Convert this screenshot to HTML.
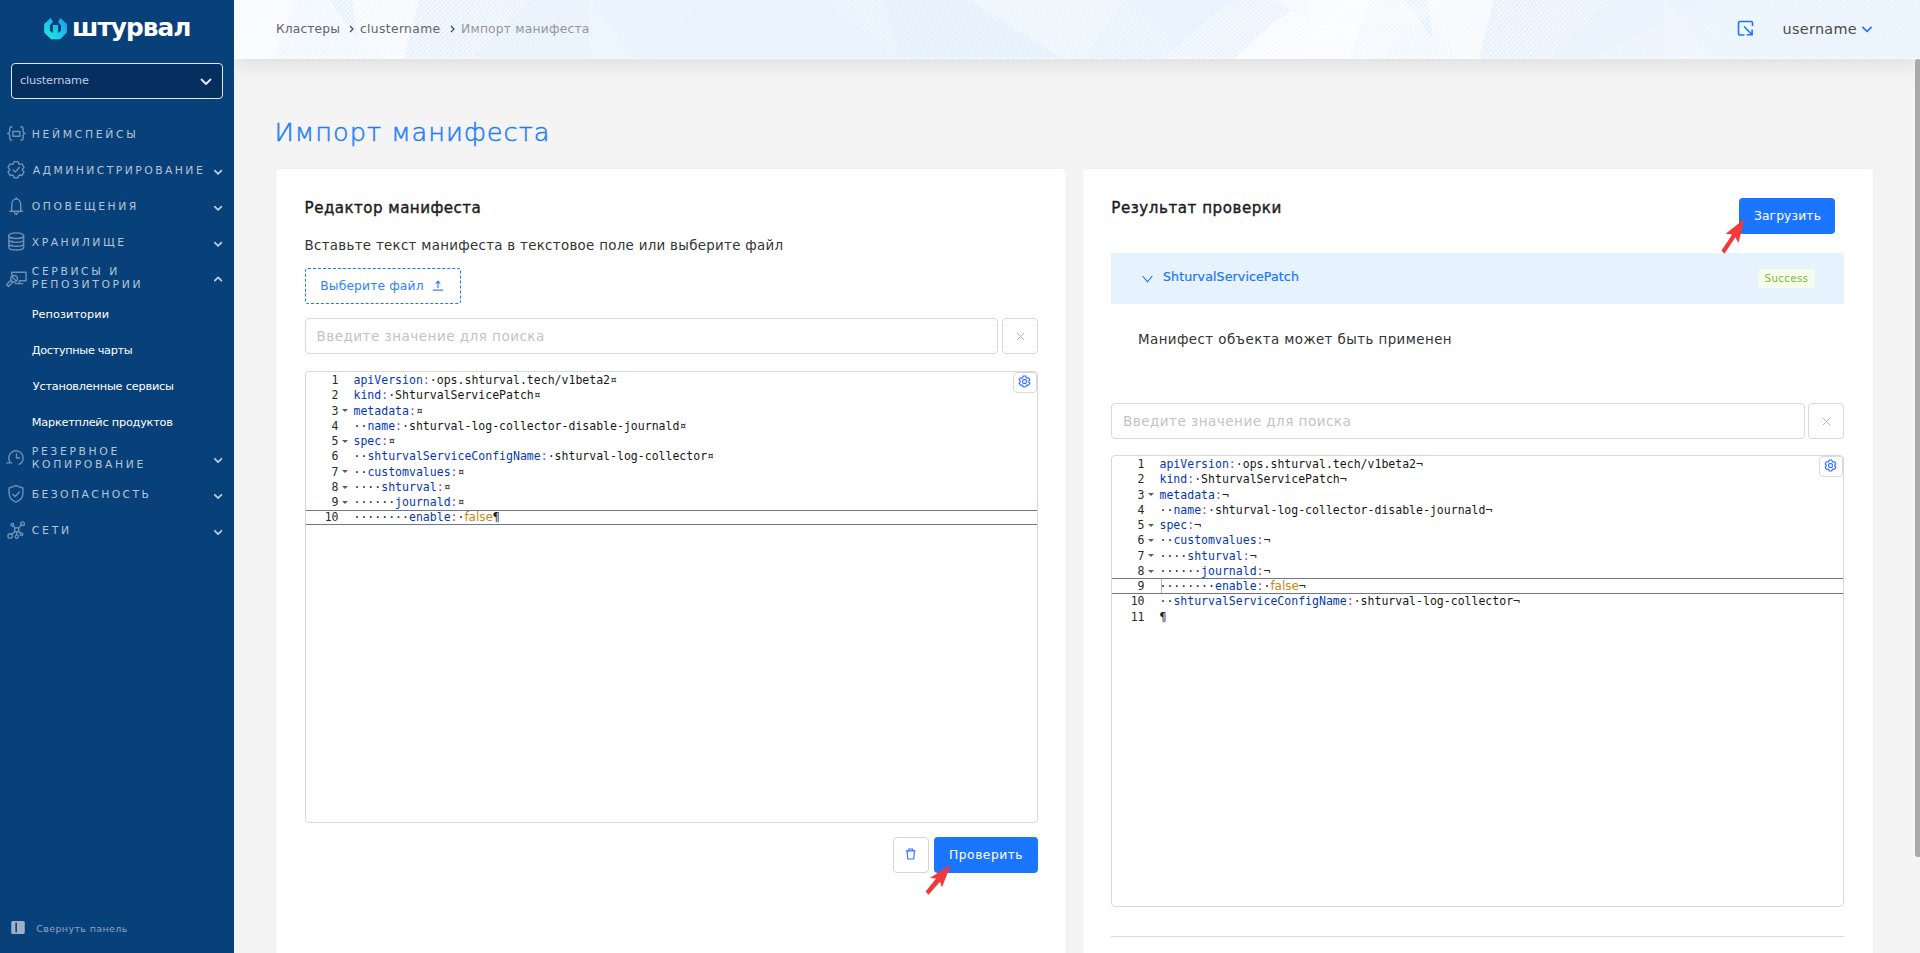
<!DOCTYPE html>
<html lang="ru">
<head>
<meta charset="utf-8">
<title>Импорт манифеста</title>
<style>
*{box-sizing:border-box;margin:0;padding:0}
html,body{width:1920px;height:953px;overflow:hidden;background:#f4f4f4;font-family:"DejaVu Sans","Liberation Sans",sans-serif;color:#333}
body{position:relative}
.abs{position:absolute}
.t{position:absolute;white-space:nowrap;line-height:1;font-family:"DejaVu Sans","Liberation Sans",sans-serif}
svg{display:block}
#side{position:absolute;left:0;top:0;width:234px;height:953px;background:#084079}
#cluster{position:absolute;left:11px;top:63px;width:212px;height:36px;border:1px solid #dfe6ee;border-radius:4px;background:#052f5f}
.chev{position:absolute;left:213.500px;width:9px;height:6px}
.ico{position:absolute}
#head{position:absolute;left:234px;top:0;width:1686px;height:59px;background:#e9f3fe;box-shadow:0 4px 24px rgba(0,0,0,.10);overflow:visible}
.card{position:absolute;top:169px;height:800px;background:#fff;border-radius:4px;box-shadow:0 0 3px rgba(0,0,0,.05)}
.inp{position:absolute;height:36px;border:1px solid #d9d9d9;border-radius:4px;background:#fff}
.xbtn{position:absolute;width:36px;height:36px;border:1px solid #d9d9d9;border-radius:4px;background:#fff}
.xbtn svg{position:absolute;left:12.500px;top:13px}
.ed{position:absolute;border:1px solid #d8d8d8;border-radius:4px;background:#fff;overflow:hidden}
.ln{position:absolute;left:0;height:15.270px;width:100%;font-family:"DejaVu Sans Mono","Liberation Mono",monospace;font-size:11.530px;line-height:15.270px;white-space:pre;color:#1a1a1a}
.ln .n{position:absolute;right:698.500px;top:0;color:#2a2a2a}
.ln .c{position:absolute;left:47.500px;top:0}
.k{color:#0537b5}.pn{color:#9a35dc}.inv{color:#222}.v{color:#161616}
.f{font-family:"DejaVu Sans","Liberation Sans",sans-serif;color:#c48a1c;font-size:12.100px;letter-spacing:-.1px}
.fold{position:absolute;left:35.700px;top:5.700px;width:0;height:0;border-left:3px solid transparent;border-right:3px solid transparent;border-top:3.500px solid #5e5e5e}
.act{position:absolute;left:0;width:100%;border-top:1px solid #70739a;border-bottom:1px solid #70739a;height:15.500px}
.cur{position:absolute;left:48.500px;width:1px;height:14px;background:#b5b5b5}
.gear{position:absolute;right:0;top:0;width:24px;height:21px;border:1px solid #d9d9d9;border-radius:4px;background:#fff}
.gear svg{position:absolute;left:4.200px;top:2.300px}
.btn{position:absolute;background:#1a75ff;border-radius:4px;height:36px}
</style>
</head>
<body>

<div class="card" style="left:276px;width:790px"></div>
<div class="card" style="left:1083px;width:790px"></div>
<div id="head"><svg class="abs" style="left:0;top:0" width="1686" height="59" viewBox="0 0 1686 59"><defs><clipPath id="hc"><rect width="1686" height="59"/></clipPath></defs><g clip-path="url(#hc)"><g><rect x="0" y="0" width="1075" height="59" fill="#e9f3fe"/><polygon points="0,0 62,0 40,59 0,59" fill="#f8fbff"/><polygon points="62,0 125,0 150,59 40,59" fill="#f1f7fe"/><polygon points="96,0 118,0 124,40" fill="#e2effc"/><polygon points="118,0 185,0 170,59 150,59" fill="#f5f9ff"/><polygon points="185,0 240,0 228,59 170,59" fill="#e3effc"/><polygon points="240,0 355,0 355,59 228,59" fill="#e6f1fd"/><polygon points="355,0 470,0 420,59 355,59" fill="#eaf4fe"/><polygon points="650,0 735,0 830,59 665,59" fill="#e5f1fc"/><polygon points="735,0 890,0 850,59 830,59" fill="#edf6fd"/><polygon points="1000,59 1040,22 1075,0 1075,59" fill="#f7faff"/><polygon points="1040,0 1075,0 1075,20" fill="#f4f8fe"/></g><g transform="translate(1075 0)"><rect x="0" y="0" width="1075" height="59" fill="#e9f3fe"/><polygon points="0,0 62,0 40,59 0,59" fill="#f8fbff"/><polygon points="62,0 125,0 150,59 40,59" fill="#f1f7fe"/><polygon points="96,0 118,0 124,40" fill="#e2effc"/><polygon points="118,0 185,0 170,59 150,59" fill="#f5f9ff"/><polygon points="185,0 240,0 228,59 170,59" fill="#e3effc"/><polygon points="240,0 355,0 355,59 228,59" fill="#e6f1fd"/><polygon points="355,0 470,0 420,59 355,59" fill="#eaf4fe"/><polygon points="650,0 735,0 830,59 665,59" fill="#e5f1fc"/><polygon points="735,0 890,0 850,59 830,59" fill="#edf6fd"/><polygon points="1000,59 1040,22 1075,0 1075,59" fill="#f7faff"/><polygon points="1040,0 1075,0 1075,20" fill="#f4f8fe"/></g><g clip-path="url(#hc)"><path d="M-15 59L45 0M-10 59L50 0M-5 59L55 0M0 59L60 0M5 59L65 0M10 59L70 0M15 59L75 0M20 59L80 0M25 59L85 0M30 59L90 0M35 59L95 0M40 59L100 0M45 59L105 0M50 59L110 0M55 59L115 0M60 59L120 0M65 59L125 0M70 59L130 0M75 59L135 0M80 59L140 0M85 59L145 0M90 59L150 0M95 59L155 0M100 59L160 0M105 59L165 0M110 59L170 0M115 59L175 0M120 59L180 0M125 59L185 0M130 59L190 0M135 59L195 0M140 59L200 0M145 59L205 0M150 59L210 0M155 59L215 0M160 59L220 0M165 59L225 0M170 59L230 0M175 59L235 0M180 59L240 0M185 59L245 0M190 59L250 0M195 59L255 0M200 59L260 0M205 59L265 0M210 59L270 0M215 59L275 0M220 59L280 0M225 59L285 0M230 59L290 0M235 59L295 0" stroke="#ffffff" stroke-opacity="0.55" stroke-width="1.4" fill="none"/><path d="M135 59L90 0M139 59L94 0M143 59L98 0M147 59L102 0M151 59L106 0M155 59L110 0M159 59L114 0M163 59L118 0M167 59L122 0M171 59L126 0M175 59L130 0M179 59L134 0M183 59L138 0M187 59L142 0M191 59L146 0M195 59L150 0M199 59L154 0M203 59L158 0M207 59L162 0M211 59L166 0M215 59L170 0M219 59L174 0M223 59L178 0M227 59L182 0M231 59L186 0M235 59L190 0M239 59L194 0M243 59L198 0M247 59L202 0M251 59L206 0M255 59L210 0M259 59L214 0M263 59L218 0M267 59L222 0M271 59L226 0M275 59L230 0M279 59L234 0M283 59L238 0M287 59L242 0M291 59L246 0M295 59L250 0M299 59L254 0M303 59L258 0M307 59L262 0M311 59L266 0M315 59L270 0M319 59L274 0M323 59L278 0M327 59L282 0M331 59L286 0M335 59L290 0M339 59L294 0M343 59L298 0M347 59L302 0M351 59L306 0M355 59L310 0M359 59L314 0M363 59L318 0M367 59L322 0M371 59L326 0M375 59L330 0M379 59L334 0M383 59L338 0M387 59L342 0M391 59L346 0M395 59L350 0M399 59L354 0" stroke="#ffffff" stroke-opacity="0.5" stroke-width="1.2" fill="none"/><path d="M1060 59L1120 0M1065 59L1125 0M1070 59L1130 0M1075 59L1135 0M1080 59L1140 0M1085 59L1145 0M1090 59L1150 0M1095 59L1155 0M1100 59L1160 0M1105 59L1165 0M1110 59L1170 0M1115 59L1175 0M1120 59L1180 0M1125 59L1185 0M1130 59L1190 0M1135 59L1195 0M1140 59L1200 0M1145 59L1205 0M1150 59L1210 0M1155 59L1215 0M1160 59L1220 0M1165 59L1225 0M1170 59L1230 0M1175 59L1235 0M1180 59L1240 0M1185 59L1245 0M1190 59L1250 0M1195 59L1255 0M1200 59L1260 0M1205 59L1265 0M1210 59L1270 0M1215 59L1275 0M1220 59L1280 0M1225 59L1285 0M1230 59L1290 0M1235 59L1295 0M1240 59L1300 0M1245 59L1305 0M1250 59L1310 0M1255 59L1315 0M1260 59L1320 0M1265 59L1325 0M1270 59L1330 0M1275 59L1335 0M1280 59L1340 0M1285 59L1345 0M1290 59L1350 0M1295 59L1355 0M1300 59L1360 0M1305 59L1365 0M1310 59L1370 0" stroke="#ffffff" stroke-opacity="0.55" stroke-width="1.4" fill="none"/><path d="M1210 59L1165 0M1214 59L1169 0M1218 59L1173 0M1222 59L1177 0M1226 59L1181 0M1230 59L1185 0M1234 59L1189 0M1238 59L1193 0M1242 59L1197 0M1246 59L1201 0M1250 59L1205 0M1254 59L1209 0M1258 59L1213 0M1262 59L1217 0M1266 59L1221 0M1270 59L1225 0M1274 59L1229 0M1278 59L1233 0M1282 59L1237 0M1286 59L1241 0M1290 59L1245 0M1294 59L1249 0M1298 59L1253 0M1302 59L1257 0M1306 59L1261 0M1310 59L1265 0M1314 59L1269 0M1318 59L1273 0M1322 59L1277 0M1326 59L1281 0M1330 59L1285 0M1334 59L1289 0M1338 59L1293 0M1342 59L1297 0M1346 59L1301 0M1350 59L1305 0M1354 59L1309 0M1358 59L1313 0M1362 59L1317 0M1366 59L1321 0M1370 59L1325 0M1374 59L1329 0M1378 59L1333 0M1382 59L1337 0M1386 59L1341 0M1390 59L1345 0M1394 59L1349 0M1398 59L1353 0M1402 59L1357 0M1406 59L1361 0M1410 59L1365 0M1414 59L1369 0M1418 59L1373 0M1422 59L1377 0M1426 59L1381 0M1430 59L1385 0M1434 59L1389 0M1438 59L1393 0M1442 59L1397 0M1446 59L1401 0M1450 59L1405 0M1454 59L1409 0M1458 59L1413 0M1462 59L1417 0M1466 59L1421 0M1470 59L1425 0M1474 59L1429 0" stroke="#ffffff" stroke-opacity="0.5" stroke-width="1.2" fill="none"/><path d="M665 59L595 0M671 59L601 0M677 59L607 0M683 59L613 0M689 59L619 0M695 59L625 0M701 59L631 0M707 59L637 0M713 59L643 0M719 59L649 0M725 59L655 0M731 59L661 0M737 59L667 0M743 59L673 0M749 59L679 0M755 59L685 0M761 59L691 0M767 59L697 0M773 59L703 0M779 59L709 0M785 59L715 0M791 59L721 0M797 59L727 0M803 59L733 0M809 59L739 0M815 59L745 0M821 59L751 0M827 59L757 0M833 59L763 0M839 59L769 0M845 59L775 0M851 59L781 0M857 59L787 0M863 59L793 0M869 59L799 0M875 59L805 0M881 59L811 0M887 59L817 0M893 59L823 0M899 59L829 0M905 59L835 0M911 59L841 0M917 59L847 0M923 59L853 0M929 59L859 0M935 59L865 0M941 59L871 0M947 59L877 0M953 59L883 0M959 59L889 0" stroke="#ffffff" stroke-opacity="0.35" stroke-width="1.2" fill="none"/><path d="M930 59L1000 0M935 59L1005 0M940 59L1010 0M945 59L1015 0M950 59L1020 0M955 59L1025 0M960 59L1030 0M965 59L1035 0M970 59L1040 0M975 59L1045 0M980 59L1050 0M985 59L1055 0M990 59L1060 0M995 59L1065 0M1000 59L1070 0M1005 59L1075 0M1010 59L1080 0M1015 59L1085 0M1020 59L1090 0M1025 59L1095 0M1030 59L1100 0M1035 59L1105 0M1040 59L1110 0M1045 59L1115 0M1050 59L1120 0M1055 59L1125 0M1060 59L1130 0M1065 59L1135 0M1070 59L1140 0M1075 59L1145 0M1080 59L1150 0M1085 59L1155 0M1090 59L1160 0M1095 59L1165 0M1100 59L1170 0M1105 59L1175 0M1110 59L1180 0M1115 59L1185 0M1120 59L1190 0M1125 59L1195 0M1130 59L1200 0M1135 59L1205 0M1140 59L1210 0" stroke="#ffffff" stroke-opacity="0.6" stroke-width="1.5" fill="none"/><path d="M1360 59L1480 0M1366 59L1486 0M1372 59L1492 0M1378 59L1498 0M1384 59L1504 0M1390 59L1510 0M1396 59L1516 0M1402 59L1522 0M1408 59L1528 0M1414 59L1534 0M1420 59L1540 0M1426 59L1546 0M1432 59L1552 0M1438 59L1558 0M1444 59L1564 0M1450 59L1570 0M1456 59L1576 0M1462 59L1582 0M1468 59L1588 0M1474 59L1594 0M1480 59L1600 0M1486 59L1606 0M1492 59L1612 0M1498 59L1618 0M1504 59L1624 0M1510 59L1630 0M1516 59L1636 0M1522 59L1642 0M1528 59L1648 0M1534 59L1654 0M1540 59L1660 0M1546 59L1666 0M1552 59L1672 0M1558 59L1678 0M1564 59L1684 0M1570 59L1690 0M1576 59L1696 0M1582 59L1702 0M1588 59L1708 0M1594 59L1714 0M1600 59L1720 0M1606 59L1726 0M1612 59L1732 0M1618 59L1738 0M1624 59L1744 0M1630 59L1750 0M1636 59L1756 0M1642 59L1762 0M1648 59L1768 0M1654 59L1774 0M1660 59L1780 0M1666 59L1786 0M1672 59L1792 0M1678 59L1798 0M1684 59L1804 0M1690 59L1810 0M1696 59L1816 0M1702 59L1822 0M1708 59L1828 0M1714 59L1834 0M1720 59L1840 0M1726 59L1846 0M1732 59L1852 0M1738 59L1858 0M1744 59L1864 0M1750 59L1870 0M1756 59L1876 0M1762 59L1882 0M1768 59L1888 0M1774 59L1894 0M1780 59L1900 0M1786 59L1906 0M1792 59L1912 0M1798 59L1918 0M1804 59L1924 0" stroke="#ffffff" stroke-opacity="0.3" stroke-width="1.5" fill="none"/></g></g></svg><div class="abs" style="left:0;top:58px;width:1686px;height:1px;background:rgba(255,255,255,.55)"></div></div>
<div id="side"></div>
<div id="cluster"><svg class="abs" style="left:188px;top:14px" width="12" height="8" viewBox="0 0 12 8"><path d="M1.500 1.500 6 6l4.500-4.500" fill="none" stroke="#e8edf3" stroke-width="1.800" stroke-linecap="round" stroke-linejoin="round"/></svg></div>
<svg class="abs" style="left:0;top:0" width="234" height="953" viewBox="0 0 234 953">
<defs><linearGradient id="lg" x1="0" y1="1" x2="1" y2="0"><stop offset="0" stop-color="#1ff3e0"/><stop offset="1" stop-color="#1a97ef"/></linearGradient></defs>
<path fill="url(#lg)" d="M50.600 18 44.200 24.100v8.400l6.900 6.700h9l6.800-6.700v-8.400L60.500 18l-2.400 3.700 2.900 3.700v5.400L58.200 33v-7.900h-5.300V33l-3-2.200v-5.400l3-3.700z"/>
<g fill="none" stroke="#6f90b6" stroke-width="1.400" stroke-linecap="round" stroke-linejoin="round">
<path d="M12 126.700c-1.600 0-2.300.800-2.300 2.200v2.400c0 1.200-.700 1.900-2.100 2.100 1.400.200 2.100.900 2.100 2.100v2.400c0 1.400.700 2.200 2.300 2.200"/>
<path d="M20.800 126.700c1.600 0 2.300.800 2.300 2.200v2.400c0 1.200.700 1.900 2.100 2.100-1.400.200-2.100.900-2.100 2.100v2.400c0 1.400-.700 2.200-2.300 2.200"/>
<rect x="12.900" y="131.500" width="7" height="4.700"/>
<path d="M13.24 163.95L14.04 161.65L18.06 161.65L18.86 163.95L19.63 164.39L22.02 163.93L24.03 167.41L22.43 169.25L22.43 170.15L24.03 171.99L22.02 175.47L19.63 175.01L18.86 175.45L18.06 177.75L14.04 177.75L13.24 175.45L12.47 175.01L10.08 175.47L8.07 171.99L9.67 170.15L9.67 169.25L8.07 167.41L10.08 163.93L12.47 164.39z"/>
<path d="M13.100 169.900l2.200 2.100 4.100-4.400"/>
<path d="M16.200 197.700v1.300M11.700 211.200v-6.400c0-3.400 1.900-5.800 4.500-5.800s4.500 2.400 4.500 5.800v6.400M9.800 211.300h12.800M14.400 212.800l1.800 1.600 1.800-1.600"/>
<ellipse cx="16.250" cy="235.700" rx="7.400" ry="2.800"/>
<path d="M8.850 235.700v11.500c0 1.600 3.300 2.800 7.400 2.800s7.400-1.200 7.400-2.800v-11.500M8.850 239.600c0 1.600 3.300 2.800 7.400 2.800s7.400-1.200 7.400-2.800M8.850 243.500c0 1.600 3.300 2.800 7.400 2.800s7.400-1.200 7.400-2.800M11.800 241.300h.6M11.800 245.300h.6"/>
<path d="M11.750 275v-2.700h14.300v8.400h-6.600v2.800M15.200 283.600h7.600"/><circle cx="14.100" cy="278.800" r="3.300"/><path d="M12 276.700l4.200 4.200M11.100 280.100 6.600 284.600l1.800 1.800 4.500-4.500"/>
<path d="M9.600 461.300a7.200 7.200 0 1 1 9.700 3.100M16.500 453.600v4.400h3.100M6.900 462.900h4.900M9.300 459.300l.5 3.500"/>
<path d="M16 485.700l6.900 2.300v5.500c0 4.200-2.800 7-6.900 8.600-4.100-1.600-6.900-4.400-6.900-8.600V488zM12.700 494.200l2.500 2.400 4.300-4.600"/>
<circle cx="16.750" cy="529.800" r="2.200"/><circle cx="22.600" cy="523.700" r="1.800"/><circle cx="12.300" cy="524.800" r="1.300"/><circle cx="10.100" cy="535.900" r="2.200"/><circle cx="16.750" cy="536.700" r="1.600"/><circle cx="21.500" cy="534.200" r="1.300"/>
<path d="M18.300 528.200l3-3.200M15.300 528.200l-2.100-2.400M15.200 531.400l-3.600 3M16.750 532v3.100M18.500 531.200l2.100 2.100"/>
</g>
<g fill="none" stroke="#bccadb" stroke-width="1.800" stroke-linecap="round" stroke-linejoin="round">
<path d="M214.800 170.6l3.300 3.300 3.300-3.300"/><path d="M214.800 206.6l3.300 3.300 3.300-3.300"/><path d="M214.800 242.6l3.300 3.300 3.300-3.300"/><path d="M214.800 280.7l3.300-3.300 3.300 3.300"/><path d="M214.800 458.8l3.300 3.300 3.300-3.300"/><path d="M214.800 494.8l3.300 3.300 3.300-3.300"/><path d="M214.800 530.8l3.300 3.300 3.300-3.300"/>
</g>
<rect x="11.250" y="921" width="13.500" height="13" rx="1.600" fill="#9fb1ca"/><rect x="15.400" y="922.600" width="1.500" height="9.800" fill="#0b3f78"/>
</svg>
<!-- left card -->
<div class="abs" style="left:305px;top:268px;width:156px;height:36px;border:1px dashed #1a75ff;border-radius:3px"></div>
<svg class="abs" style="left:432px;top:279.500px" width="12" height="11" viewBox="0 0 12 11"><path d="M6 8V1.500M3.700 3.600 6 1.200l2.300 2.400M.800 10.200h10.400" fill="none" stroke="#2f82ff" stroke-width="1.200"/></svg>
<div class="inp" style="left:305px;top:318px;width:693px"></div>
<div class="xbtn" style="left:1002px;top:318px"><svg width="9" height="9" viewBox="0 0 9 9"><path d="M1 1l7 7M8 1 1 8" stroke="#b4b4b4" stroke-width="1" fill="none"/></svg></div>
<div class="ed" id="ed1" style="left:305px;top:371px;width:733px;height:452px">
<div class="act" style="top:138px;height:15px"></div>
<div class="ln" style="top:1.00px"><span class="n">1</span><span class="c"><span class="k">apiVersion</span><span class="pn">:</span><span class="inv">·</span><span class="v">ops.shturval.tech/v1beta2</span><span class="inv">¤</span></span></div>
<div class="ln" style="top:16.27px"><span class="n">2</span><span class="c"><span class="k">kind</span><span class="pn">:</span><span class="inv">·</span><span class="v">ShturvalServicePatch</span><span class="inv">¤</span></span></div>
<div class="ln" style="top:31.54px"><span class="n">3</span><i class="fold"></i><span class="c"><span class="k">metadata</span><span class="pn">:</span><span class="inv">¤</span></span></div>
<div class="ln" style="top:46.81px"><span class="n">4</span><span class="c"><span class="inv">··</span><span class="k">name</span><span class="pn">:</span><span class="inv">·</span><span class="v">shturval-log-collector-disable-journald</span><span class="inv">¤</span></span></div>
<div class="ln" style="top:62.08px"><span class="n">5</span><i class="fold"></i><span class="c"><span class="k">spec</span><span class="pn">:</span><span class="inv">¤</span></span></div>
<div class="ln" style="top:77.35px"><span class="n">6</span><span class="c"><span class="inv">··</span><span class="k">shturvalServiceConfigName</span><span class="pn">:</span><span class="inv">·</span><span class="v">shturval-log-collector</span><span class="inv">¤</span></span></div>
<div class="ln" style="top:92.62px"><span class="n">7</span><i class="fold"></i><span class="c"><span class="inv">··</span><span class="k">customvalues</span><span class="pn">:</span><span class="inv">¤</span></span></div>
<div class="ln" style="top:107.89px"><span class="n">8</span><i class="fold"></i><span class="c"><span class="inv">····</span><span class="k">shturval</span><span class="pn">:</span><span class="inv">¤</span></span></div>
<div class="ln" style="top:123.16px"><span class="n">9</span><i class="fold"></i><span class="c"><span class="inv">······</span><span class="k">journald</span><span class="pn">:</span><span class="inv">¤</span></span></div>
<div class="ln" style="top:138.43px"><span class="n">10</span><span class="c"><span class="inv">········</span><span class="k">enable</span><span class="pn">:</span><span class="inv">·</span><span class="f">false</span><span class="inv">¶</span></span></div>
<div class="gear"><svg width="13" height="13" viewBox="0 0 13 13" fill="none" stroke="#2f6bff" stroke-width="1.1" stroke-linejoin="round"><path d="M4.66 2.73L5.24 1.04L7.76 1.04L8.34 2.73L8.85 3.02L10.60 2.68L11.86 4.86L10.69 6.21L10.69 6.79L11.86 8.14L10.60 10.32L8.85 9.98L8.34 10.27L7.76 11.96L5.24 11.96L4.66 10.27L4.15 9.98L2.40 10.32L1.14 8.14L2.31 6.79L2.31 6.21L1.14 4.86L2.40 2.68L4.15 3.02z"/><rect x="4.6" y="4.6" width="3.8" height="3.8" rx="1.2"/></svg></div>
</div>
<div class="abs" style="left:893px;top:837px;width:36px;height:36px;border:1px solid #d6d6d6;border-radius:4px;background:#fff"><svg class="abs" style="left:10.600px;top:9.600px" width="11.500" height="12.400" viewBox="0 0 12 13"><path d="M1 3h10M2.200 3l.600 8.500h6.400L9.800 3M4 2.800V1h4v1.800" fill="none" stroke="#3a6cff" stroke-width="1.200" stroke-linejoin="round"/></svg></div>
<div class="btn" style="left:934px;top:837px;width:104px"></div>
<!-- right card -->
<div class="btn" style="left:1739px;top:198px;width:96px"></div>
<div class="abs" style="left:1111px;top:253px;width:733px;height:50.500px;background:#e6f3ff"></div>
<svg class="abs" style="left:1141.500px;top:275px" width="11" height="8" viewBox="0 0 11 8"><path d="M.700 1 5.500 6.800 10.300 1" fill="none" stroke="#1a75ff" stroke-width="1.100"/></svg>
<div class="abs" style="left:1758px;top:269px;width:57px;height:18.500px;border-radius:4px;background:#f5fcec"></div>
<div class="inp" style="left:1111px;top:403px;width:694px"></div>
<div class="xbtn" style="left:1808px;top:403px"><svg width="9" height="9" viewBox="0 0 9 9"><path d="M1 1l7 7M8 1 1 8" stroke="#b4b4b4" stroke-width="1" fill="none"/></svg></div>
<div class="ed" id="ed2" style="left:1111px;top:455px;width:733px;height:452px">
<div class="act" style="top:122px;height:16px"></div>
<div class="ln" style="top:1.00px"><span class="n">1</span><span class="c"><span class="k">apiVersion</span><span class="pn">:</span><span class="inv">·</span><span class="v">ops.shturval.tech/v1beta2</span><span class="inv">¬</span></span></div>
<div class="ln" style="top:16.27px"><span class="n">2</span><span class="c"><span class="k">kind</span><span class="pn">:</span><span class="inv">·</span><span class="v">ShturvalServicePatch</span><span class="inv">¬</span></span></div>
<div class="ln" style="top:31.54px"><span class="n">3</span><i class="fold"></i><span class="c"><span class="k">metadata</span><span class="pn">:</span><span class="inv">¬</span></span></div>
<div class="ln" style="top:46.81px"><span class="n">4</span><span class="c"><span class="inv">··</span><span class="k">name</span><span class="pn">:</span><span class="inv">·</span><span class="v">shturval-log-collector-disable-journald</span><span class="inv">¬</span></span></div>
<div class="ln" style="top:62.08px"><span class="n">5</span><i class="fold"></i><span class="c"><span class="k">spec</span><span class="pn">:</span><span class="inv">¬</span></span></div>
<div class="ln" style="top:77.35px"><span class="n">6</span><i class="fold"></i><span class="c"><span class="inv">··</span><span class="k">customvalues</span><span class="pn">:</span><span class="inv">¬</span></span></div>
<div class="ln" style="top:92.62px"><span class="n">7</span><i class="fold"></i><span class="c"><span class="inv">····</span><span class="k">shturval</span><span class="pn">:</span><span class="inv">¬</span></span></div>
<div class="ln" style="top:107.89px"><span class="n">8</span><i class="fold"></i><span class="c"><span class="inv">······</span><span class="k">journald</span><span class="pn">:</span><span class="inv">¬</span></span></div>
<div class="ln" style="top:123.16px"><span class="n">9</span><span class="c"><span class="inv">········</span><span class="k">enable</span><span class="pn">:</span><span class="inv">·</span><span class="f">false</span><span class="inv">¬</span></span></div>
<div class="ln" style="top:138.43px"><span class="n">10</span><span class="c"><span class="inv">··</span><span class="k">shturvalServiceConfigName</span><span class="pn">:</span><span class="inv">·</span><span class="v">shturval-log-collector</span><span class="inv">¬</span></span></div>
<div class="ln" style="top:153.70px"><span class="n">11</span><span class="c"><span class="inv">¶</span></span></div>
<div class="cur" style="top:123.00px"></div>
<div class="gear"><svg width="13" height="13" viewBox="0 0 13 13" fill="none" stroke="#2f6bff" stroke-width="1.1" stroke-linejoin="round"><path d="M4.66 2.73L5.24 1.04L7.76 1.04L8.34 2.73L8.85 3.02L10.60 2.68L11.86 4.86L10.69 6.21L10.69 6.79L11.86 8.14L10.60 10.32L8.85 9.98L8.34 10.27L7.76 11.96L5.24 11.96L4.66 10.27L4.15 9.98L2.40 10.32L1.14 8.14L2.31 6.79L2.31 6.21L1.14 4.86L2.40 2.68L4.15 3.02z"/><rect x="4.6" y="4.6" width="3.8" height="3.8" rx="1.2"/></svg></div>
</div>
<div class="abs" style="left:1111px;top:936px;width:733px;height:1px;background:#d9d9d9"></div>
<!-- header right -->
<svg class="abs" style="left:1736.500px;top:19.500px" width="18" height="17" viewBox="0 0 18 17"><path d="M15.500 6V3a1.500 1.500 0 0 0-1.500-1.500H3A1.500 1.500 0 0 0 1.500 3v10.500A1.500 1.500 0 0 0 3 15h4.500" fill="none" stroke="#1a75ff" stroke-width="1.600"/><path d="M7 6.500l7.700 7.700M15.100 9.400v5.300H9.800" fill="none" stroke="#1a75ff" stroke-width="1.600"/></svg>
<svg class="abs" style="left:1860.500px;top:25.500px" width="12" height="8" viewBox="0 0 12 8"><path d="M1.900 1.400 6 5.500l4.100-4.100" fill="none" stroke="#1a75ff" stroke-width="1.700" stroke-linecap="round" stroke-linejoin="round"/></svg>
<svg class="abs" style="left:349px;top:25px" width="5" height="8" viewBox="0 0 5 8"><path d="M1 1l3 3-3 3" fill="none" stroke="#4a4a4a" stroke-width="1.200"/></svg>
<svg class="abs" style="left:450px;top:25px" width="5" height="8" viewBox="0 0 5 8"><path d="M1 1l3 3-3 3" fill="none" stroke="#4a4a4a" stroke-width="1.200"/></svg>
<!-- scrollbar -->
<div class="abs" style="left:1915px;top:59px;width:6px;height:798px;background:#a9a9a9;border-radius:3px"></div>
<!-- arrows -->
<svg class="abs" style="left:915px;top:855px" width="45" height="45" viewBox="915 855 45 45"><path d="M951 864.400 929.900 878l6.100.600-10.300 12.900 2.800 3.200 11.500-13 1.900 5.800z" fill="#ef3a3c"/></svg>
<svg class="abs" style="left:1712px;top:210px" width="45" height="50" viewBox="1712 210 45 50"><path d="M1744.900 218.400 1725.700 233.700l6.500.700-10.700 16.200 2.900 3.200 11-16.500 3 5.800z" fill="#ef3a3c"/></svg>
<div class="t" id="m1" style="left:31.75px;top:130.10px;font-size:10.8px;color:#b6c5d8;letter-spacing:2.667px;">НЕЙМСПЕЙСЫ</div>
<div class="t" id="m2" style="left:32.75px;top:166.00px;font-size:10.8px;color:#b6c5d8;letter-spacing:2.438px;">АДМИНИСТРИРОВАНИЕ</div>
<div class="t" id="m3" style="left:31.75px;top:202.00px;font-size:10.8px;color:#b6c5d8;letter-spacing:2.539px;">ОПОВЕЩЕНИЯ</div>
<div class="t" id="m4" style="left:31.75px;top:238.00px;font-size:10.8px;color:#b6c5d8;letter-spacing:2.500px;">ХРАНИЛИЩЕ</div>
<div class="t" id="m5a" style="left:31.75px;top:267.00px;font-size:10.8px;color:#b6c5d8;letter-spacing:2.594px;">СЕРВИСЫ И</div>
<div class="t" id="m5b" style="left:31.75px;top:280.00px;font-size:10.8px;color:#b6c5d8;letter-spacing:2.600px;">РЕПОЗИТОРИИ</div>
<div class="t" id="m6a" style="left:31.75px;top:447.00px;font-size:10.8px;color:#b6c5d8;letter-spacing:2.644px;">РЕЗЕРВНОЕ</div>
<div class="t" id="m6b" style="left:31.75px;top:460.00px;font-size:10.8px;color:#b6c5d8;letter-spacing:2.635px;">КОПИРОВАНИЕ</div>
<div class="t" id="m7" style="left:31.75px;top:490.00px;font-size:10.8px;color:#b6c5d8;letter-spacing:2.395px;">БЕЗОПАСНОСТЬ</div>
<div class="t" id="m8" style="left:31.75px;top:526.00px;font-size:10.8px;color:#b6c5d8;letter-spacing:2.783px;">СЕТИ</div>
<div class="t" id="s1" style="left:31.75px;top:309.10px;font-size:11.3px;color:#fff;letter-spacing:0.050px;">Репозитории</div>
<div class="t" id="s2" style="left:31.75px;top:345.00px;font-size:11.3px;color:#fff;letter-spacing:-0.346px;">Доступные чарты</div>
<div class="t" id="s3" style="left:32.75px;top:381.00px;font-size:11.3px;color:#fff;letter-spacing:-0.212px;">Установленные сервисы</div>
<div class="t" id="s4" style="left:31.75px;top:417.00px;font-size:11.3px;color:#fff;letter-spacing:-0.237px;">Маркетплейс продуктов</div>
<div class="t" id="collapse" style="left:36.25px;top:924.00px;font-size:9.5px;color:#8ea5c1;letter-spacing:0.375px;">Свернуть панель</div>
<div class="t" id="cl" style="left:19.90px;top:75.40px;font-size:11.3px;color:#c3d0e2;letter-spacing:-0.120px;">clustername</div>
<div class="t" id="logo" style="left:72.00px;top:15.90px;font-size:24.8px;color:#fff;letter-spacing:-0.950px;font-weight:700">штурвал</div>
<div class="t" id="b1" style="left:275.90px;top:23.00px;font-size:12.3px;color:#646464;letter-spacing:0.121px;">Кластеры</div>
<div class="t" id="b2" style="left:359.90px;top:23.00px;font-size:12.3px;color:#646464;letter-spacing:0.370px;">clustername</div>
<div class="t" id="b3" style="left:461.00px;top:23.00px;font-size:12.3px;color:#969696;letter-spacing:0.200px;">Импорт манифеста</div>
<div class="t" id="user" style="left:1782.50px;top:22.00px;font-size:14.4px;color:#4a4a4a;letter-spacing:0.314px;">username</div>
<div class="t" id="title" style="left:274.50px;top:120.00px;font-size:25.6px;color:#1f7cff;letter-spacing:1.033px;font-weight:200;-webkit-text-stroke:.5px #1f7cff">Импорт манифеста</div>
<div class="t" id="h1" style="left:304.60px;top:201.00px;font-size:15.1px;color:#1c1c1c;letter-spacing:0.459px;-webkit-text-stroke:.4px #1c1c1c">Редактор манифеста</div>
<div class="t" id="p1" style="left:304.60px;top:239.00px;font-size:13.4px;color:#333;letter-spacing:0.300px;">Вставьте текст манифеста в текстовое поле или выберите файл</div>
<div class="t" id="file" style="left:320.25px;top:280.00px;font-size:12.3px;color:#2f82ff;letter-spacing:0.137px;">Выберите файл</div>
<div class="t" id="ph1" style="left:316.50px;top:330.25px;font-size:13.6px;color:#c3c3c3;letter-spacing:0.438px;">Введите значение для поиска</div>
<div class="t" id="check" style="left:949.10px;top:849.00px;font-size:12.3px;color:#fff;letter-spacing:0.487px;">Проверить</div>
<div class="t" id="h2" style="left:1111.30px;top:201.00px;font-size:15.1px;color:#1c1c1c;letter-spacing:0.535px;-webkit-text-stroke:.4px #1c1c1c">Результат проверки</div>
<div class="t" id="load" style="left:1753.90px;top:210.00px;font-size:12.3px;color:#fff;letter-spacing:0.137px;">Загрузить</div>
<div class="t" id="ssp" style="left:1163.00px;top:271.30px;font-size:12.6px;color:#1a75ff;letter-spacing:0.105px;-webkit-text-stroke:.2px #1a75ff">ShturvalServicePatch</div>
<div class="t" id="succ" style="left:1764.60px;top:273.00px;font-size:10.4px;color:#7fba3c;letter-spacing:0.267px;">Success</div>
<div class="t" id="p2" style="left:1138.00px;top:333.30px;font-size:13.4px;color:#333;letter-spacing:0.437px;">Манифест объекта может быть применен</div>
<div class="t" id="ph2" style="left:1123.00px;top:415.25px;font-size:13.6px;color:#c3c3c3;letter-spacing:0.438px;">Введите значение для поиска</div>
</body>
</html>
